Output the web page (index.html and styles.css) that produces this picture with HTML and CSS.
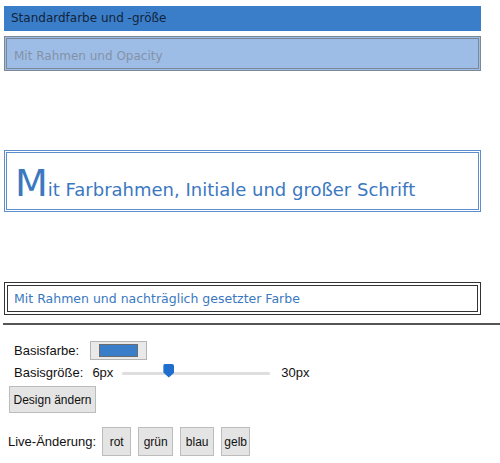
FILE: index.html
```html
<!DOCTYPE html>
<html lang="de">
<head>
<meta charset="utf-8">
<link rel="stylesheet" href="styles.css">
</head>
<body>
<div class="boxes">
  <div class="box box-default">Standardfarbe und -größe</div>
  <div class="box box-opacity">Mit Rahmen und Opacity</div>
  <div class="box box-big"><span class="initial">M</span>it Farbrahmen, Initiale und großer Schrift</div>
  <div class="box box-late">Mit Rahmen und nachträglich gesetzter Farbe</div>
</div>
<hr class="sep">
<div class="controls">
  <div class="row">
    <span class="label">Basisfarbe:</span>
    <span class="color-input"><span class="swatch"></span></span>
  </div>
  <div class="row">
    <span class="label">Basisgröße:</span>
    <span class="min">6px</span>
    <span class="slider"><span class="track"></span><span class="thumb"></span></span>
    <span class="max">30px</span>
  </div>
  <div class="row">
    <button class="btn btn-design">Design ändern</button>
  </div>
  <div class="row live">
    <span class="label">Live-Änderung:</span>
    <button class="btn btn-rot">rot</button>
    <button class="btn btn-gruen">grün</button>
    <button class="btn btn-blau">blau</button>
    <button class="btn btn-gelb">gelb</button>
  </div>
</div>
</body>
</html>
```
FILE: styles.css
```css
html, body { margin: 0; padding: 0; background: #fff; }
body { font-family: "DejaVu Sans", Verdana, sans-serif; }
.boxes { padding: 6px 19px 0 4px; }
.box { box-sizing: border-box; }
.box-default {
  height: 25px;
  background: #3a7ec9;
  color: #13233a;
  font-size: 12px;
  line-height: 25px;
  padding-left: 7px;
}
.box-opacity {
  margin-top: 5px;
  height: 35px;
  background: #9ebde6;
  border: 3px double #7d8896;
  color: #8392a8;
  font-size: 12px;
  line-height: 34px;
  padding-left: 7px;
}
.box-big {
  margin-top: 79px;
  height: 62px;
  border: 3px double #5b8ecb;
  color: #3b78bf;
  font-size: 18px;
  padding: 10px 0 0 8px;
  line-height: 40px;
}
.initial { font-size: 38px; vertical-align: baseline; }
.box-late {
  margin-top: 70px;
  height: 33px;
  border: 4px double #333;
  color: #3a78c0;
  font-size: 12.5px;
  line-height: 25px;
  padding-left: 6px;
}
.sep { margin: 8px 0 0 3px; border: 0; border-top: 2px solid #555; }
.controls {
  padding: 16px 0 0 14px;
  font-family: "Liberation Sans", Tahoma, sans-serif;
  font-size: 13px;
  color: #111;
}
.row { display: flex; align-items: center; }
.row + .row { margin-top: 5px; }
.color-input {
  margin-left: 11px;
  width: 57px; height: 19px;
  box-sizing: border-box;
  border: 1px solid #b4b4b4;
  background: #e9e9e9;
  display: flex; align-items: center; justify-content: center;
}
.swatch { width: 37px; height: 11px; background: #3a7ec9; border: 1px solid #6b6b6b; }
.min { margin-left: 9px; }
.slider { position: relative; width: 148px; height: 14px; margin-left: 9px; }
.track { position: absolute; left: 0; right: 0; top: 6px; height: 3px; background: #dedede; border-radius: 2px; }
.thumb {
  position: absolute; left: 41px; top: -2px;
  width: 11px; height: 14px;
  background: #1f6dcc;
  clip-path: polygon(0 0, 100% 0, 100% 65%, 50% 100%, 0 65%);
  border-radius: 2px 2px 0 0;
}
.max { margin-left: 11px; }
.btn {
  font-family: "Liberation Sans", Tahoma, sans-serif;
  font-size: 12px;
  color: #111;
  background: #e4e4e4;
  border: 1px solid #bcbcbc;
  border-radius: 0;
  padding: 0;
  height: 27px;
  margin: 0;
  white-space: nowrap;
  text-align: center;
}
.btn-design { margin-left: -5px; height: 27px; margin-top: 1px; width: 87px; }
.live { margin-top: 14px !important; margin-left: -6px; }
.live .label { margin-right: 6px; }
.live .btn { height: 29px; margin-right: 7px; }
.btn-rot { width: 29px; }
.btn-gruen { width: 35px; }
.btn-blau { width: 34px; }
.btn-gelb { width: 29px; }
```
